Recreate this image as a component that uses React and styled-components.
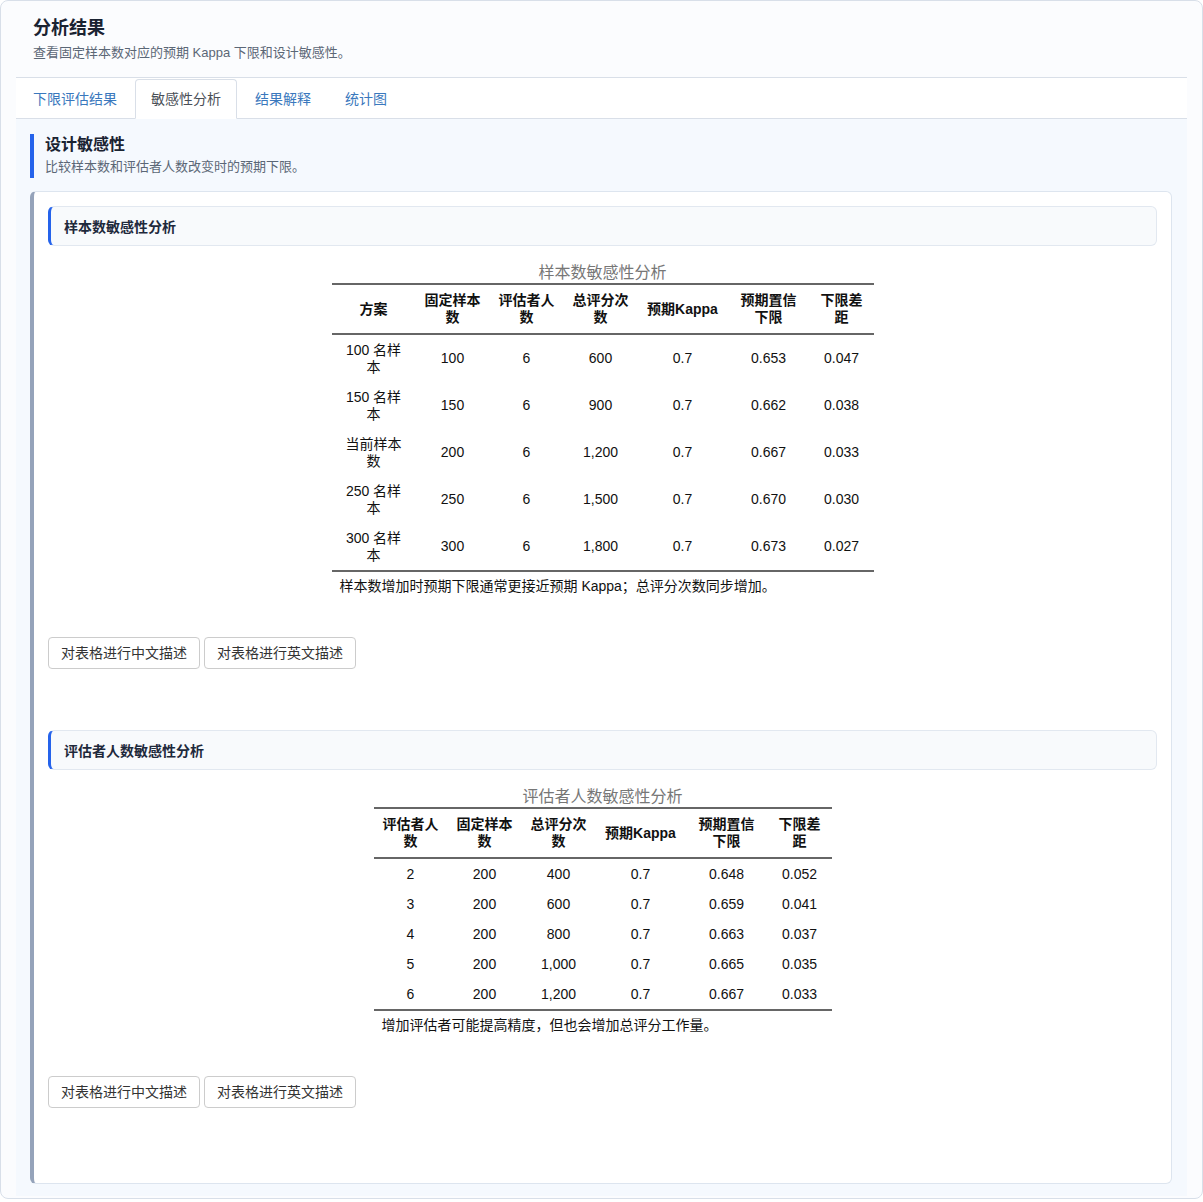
import React from 'react';
import styled, { createGlobalStyle } from 'styled-components';

const GlobalStyle = createGlobalStyle`
  html, body {
    margin: 0;
    padding: 0;
    background: #ffffff;
  }
  body {
    font-family: "Liberation Sans", "Noto Sans CJK SC", sans-serif;
    color: #1f2937;
  }
  * {
    box-sizing: border-box;
  }
`;

const Frame = styled.div`
  width: 1203px;
  border: 1px solid #d8dfe9;
  border-radius: 8px;
  background: #fbfcfe;
  padding: 0 15px 2px 15px;
`;

const Header = styled.div`
  padding: 14px 17px 14px;
  border-bottom: 1px solid #d9dfe8;
`;

const Title = styled.h1`
  margin: 0;
  font-size: 18px;
  line-height: 26px;
  font-weight: 700;
  color: #1a2332;
`;

const Subtitle = styled.p`
  margin: 2px 0 0;
  font-size: 13px;
  line-height: 20px;
  color: #5b6776;
`;

const TabBar = styled.div`
  display: flex;
  background: #ffffff;
  padding-top: 1px;
  border-bottom: 1px solid #d9dfe8;
`;

const Tab = styled.div`
  height: 40px;
  margin-right: 2px;
  margin-bottom: -1px;
  padding: 9px 15px;
  font-size: 14px;
  line-height: 20px;
  border: 1px solid ${p => (p.$active ? '#d9dfe8' : 'transparent')};
  border-bottom-color: ${p => (p.$active ? '#ffffff' : 'transparent')};
  border-radius: 4px 4px 0 0;
  background: ${p => (p.$active ? '#ffffff' : 'transparent')};
  color: ${p => (p.$active ? '#4a4f57' : '#3a78bd')};
  &:first-child {
    margin-left: 1px;
  }
`;

const Content = styled.div`
  background: #f5f9fe;
  padding: 15px 15px 12px 14px;
`;

const SectionHead = styled.div`
  border-left: 4px solid #2563eb;
  padding: 0 0 2px 11px;
  margin-bottom: 13px;
`;

const SectionTitle = styled.h2`
  margin: 0;
  font-size: 16px;
  line-height: 22px;
  font-weight: 700;
  color: #1a2332;
`;

const SectionDesc = styled.p`
  margin: 2px 0 0;
  font-size: 13px;
  line-height: 18px;
  color: #5b6776;
`;

const Card = styled.div`
  background: #ffffff;
  border: 1px solid #dde5ef;
  border-left: 4px solid #95a3ba;
  border-radius: 6px;
  padding: 14px;
`;

const Block = styled.div`
  padding-bottom: 61px;
`;

const SubHead = styled.div`
  height: 40px;
  display: flex;
  align-items: center;
  padding-left: 13px;
  background: #f8fafc;
  border: 1px solid #e2e8f0;
  border-left: 3px solid #2563eb;
  border-radius: 6px;
  font-size: 14px;
  font-weight: 700;
  color: #1e293b;
`;

const TableArea = styled.div`
  margin-top: 16px;
  display: flex;
  justify-content: center;
`;

const Table = styled.table`
  border-collapse: collapse;
  table-layout: fixed;
  width: ${p => p.$width}px;
  font-family: "Liberation Sans", "Noto Sans CJK SC", sans-serif;
  font-size: 14px;
  color: #111111;
`;

const Caption = styled.caption`
  caption-side: top;
  font-size: 16px;
  line-height: 21px;
  color: #777777;
  text-align: center;
`;

const Col = styled.col`
  width: ${p => p.$w}px;
`;

const Th = styled.th`
  padding: 7px 8px;
  line-height: 17px;
  font-weight: 700;
  text-align: center;
  vertical-align: middle;
  border-top: 2px solid #666666;
  border-bottom: 2px solid #666666;
`;

const Tr = styled.tr`
  &:last-child td {
    border-bottom: 2px solid #666666;
  }
`;

const Td = styled.td`
  padding: 6.5px 8px;
  line-height: 17px;
  text-align: center;
  vertical-align: middle;
`;

const NoteCell = styled.td`
  padding: 4px 8px 0;
  line-height: 20px;
  text-align: left;
  color: #111111;
`;

const ButtonRow = styled.div`
  display: flex;
  gap: 4px;
  margin-top: 41px;
`;

const Button = styled.button`
  height: 32px;
  padding: 5px 12px;
  font-family: "Liberation Sans", "Noto Sans CJK SC", sans-serif;
  font-size: 14px;
  line-height: 20px;
  color: #333333;
  background: #ffffff;
  border: 1px solid #cccccc;
  border-radius: 4px;
`;

const sampleCols = [84, 74, 74, 74, 90, 82, 64];
const sampleHead = ['方案', '固定样本数', '评估者人数', '总评分次数', '预期Kappa', '预期置信下限', '下限差距'];
const sampleRows = [
  ['100 名样本', '100', '6', '600', '0.7', '0.653', '0.047'],
  ['150 名样本', '150', '6', '900', '0.7', '0.662', '0.038'],
  ['当前样本数', '200', '6', '1,200', '0.7', '0.667', '0.033'],
  ['250 名样本', '250', '6', '1,500', '0.7', '0.670', '0.030'],
  ['300 名样本', '300', '6', '1,800', '0.7', '0.673', '0.027']
];

const raterCols = [74, 74, 74, 90, 82, 64];
const raterHead = ['评估者人数', '固定样本数', '总评分次数', '预期Kappa', '预期置信下限', '下限差距'];
const raterRows = [
  ['2', '200', '400', '0.7', '0.648', '0.052'],
  ['3', '200', '600', '0.7', '0.659', '0.041'],
  ['4', '200', '800', '0.7', '0.663', '0.037'],
  ['5', '200', '1,000', '0.7', '0.665', '0.035'],
  ['6', '200', '1,200', '0.7', '0.667', '0.033']
];

function SensTable({ title, cols, head, rows, note }) {
  const width = cols.reduce((a, b) => a + b, 0);
  return (
    <TableArea>
      <Table $width={width}>
        <Caption>{title}</Caption>
        <colgroup>
          {cols.map((w, i) => (
            <Col key={i} $w={w} />
          ))}
        </colgroup>
        <thead>
          <tr>
            {head.map(h => (
              <Th key={h}>{h}</Th>
            ))}
          </tr>
        </thead>
        <tbody>
          {rows.map((r, i) => (
            <Tr key={i}>
              {r.map((c, j) => (
                <Td key={j}>{c}</Td>
              ))}
            </Tr>
          ))}
        </tbody>
        <tfoot>
          <tr>
            <NoteCell colSpan={cols.length}>{note}</NoteCell>
          </tr>
        </tfoot>
      </Table>
    </TableArea>
  );
}

function AnalysisBlock(props) {
  return (
    <Block>
      <SubHead>{props.title}</SubHead>
      <SensTable {...props} />
      <ButtonRow>
        <Button>对表格进行中文描述</Button>
        <Button>对表格进行英文描述</Button>
      </ButtonRow>
    </Block>
  );
}

export default function App() {
  return (
    <>
      <GlobalStyle />
      <Frame>
        <Header>
          <Title>分析结果</Title>
          <Subtitle>查看固定样本数对应的预期 Kappa 下限和设计敏感性。</Subtitle>
        </Header>
        <TabBar>
          <Tab>下限评估结果</Tab>
          <Tab $active>敏感性分析</Tab>
          <Tab>结果解释</Tab>
          <Tab>统计图</Tab>
        </TabBar>
        <Content>
          <SectionHead>
            <SectionTitle>设计敏感性</SectionTitle>
            <SectionDesc>比较样本数和评估者人数改变时的预期下限。</SectionDesc>
          </SectionHead>
          <Card>
            <AnalysisBlock
              title="样本数敏感性分析"
              cols={sampleCols}
              head={sampleHead}
              rows={sampleRows}
              note="样本数增加时预期下限通常更接近预期 Kappa；总评分次数同步增加。"
            />
            <AnalysisBlock
              title="评估者人数敏感性分析"
              cols={raterCols}
              head={raterHead}
              rows={raterRows}
              note="增加评估者可能提高精度，但也会增加总评分工作量。"
            />
          </Card>
        </Content>
      </Frame>
    </>
  );
}
